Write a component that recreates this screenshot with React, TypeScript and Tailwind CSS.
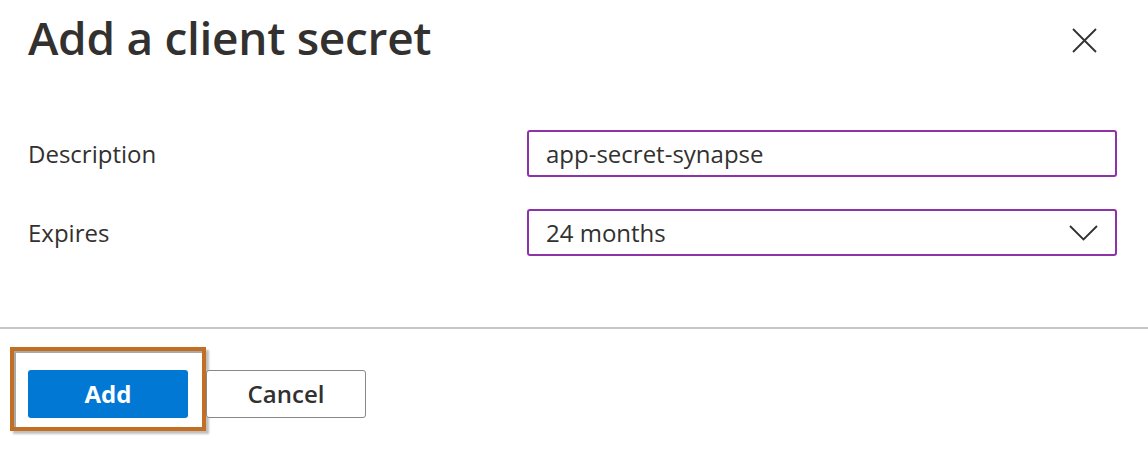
function FieldRow({ label, children }: { label: string; children: React.ReactNode }) {
    return (
        <div className="flex h-[47px] items-center">
            <div className="w-[499px] shrink-0 text-[24px] text-[#323130]">{label}</div>
            {children}
        </div>
    )
}

export default function App() {
    return (
        <div
            className="flex h-[453px] w-[1148px] flex-col bg-white text-[#323130]"
            style={{ fontFamily: '"Open Sans", "Noto Sans", sans-serif' }}
        >
            <div className="flex h-[84px] items-start justify-between pl-[28px] pr-[51px]">
                <h1 className="mt-[6px] text-[46px] font-semibold leading-[62px] tracking-[-0.3px]">
                    Add a client secret
                </h1>
                <button className="mt-[28px]">
                    <svg width="25" height="25" viewBox="0 0 25 25" fill="none" stroke="#323130" strokeWidth="1.8">
                        <path d="M1 1L24 24M24 1L1 24" />
                    </svg>
                </button>
            </div>

            <div className="flex flex-col gap-[32px] pl-[28px] pr-[31px] pt-[46px]">
                <FieldRow label="Description">
                    <div className="flex h-[47px] flex-1 items-center rounded-[3px] border-2 border-[#8e33a7] px-[17px] text-[24px]">
                        app-secret-synapse
                    </div>
                </FieldRow>
                <FieldRow label="Expires">
                    <div className="flex h-[47px] flex-1 items-center justify-between rounded-[3px] border-2 border-[#8e33a7] pl-[17px] pr-[17px] text-[24px]">
                        <span>24 months</span>
                        <svg width="29" height="16" viewBox="0 0 29 16" fill="none" stroke="#323130" strokeWidth="1.8">
                            <path d="M1 1L14.5 14.5L28 1" />
                        </svg>
                    </div>
                </FieldRow>
            </div>

            <div className="mt-[71px] h-[2px] w-full bg-[#c8c6c4]" />

            <div className="flex items-start pl-[10px] pt-[18px]">
                <div className="border-4 border-[#c26f24] px-[14px] pb-[9px] pt-[19px] shadow-[inset_2px_2px_0_#a8a8a8,3px_3px_2px_rgba(0,0,0,0.25)]">
                    <button className="flex h-[48px] w-[160px] items-center justify-center rounded-[3px] bg-[#0078d4] text-[24px] font-bold text-white">
                        Add
                    </button>
                </div>
                <button className="mt-[23px] flex h-[48px] w-[160px] items-center justify-center rounded-[3px] border-[1.5px] border-[#8a8886] bg-white text-[24px] font-semibold text-[#323130]">
                    Cancel
                </button>
            </div>
        </div>
    )
}
